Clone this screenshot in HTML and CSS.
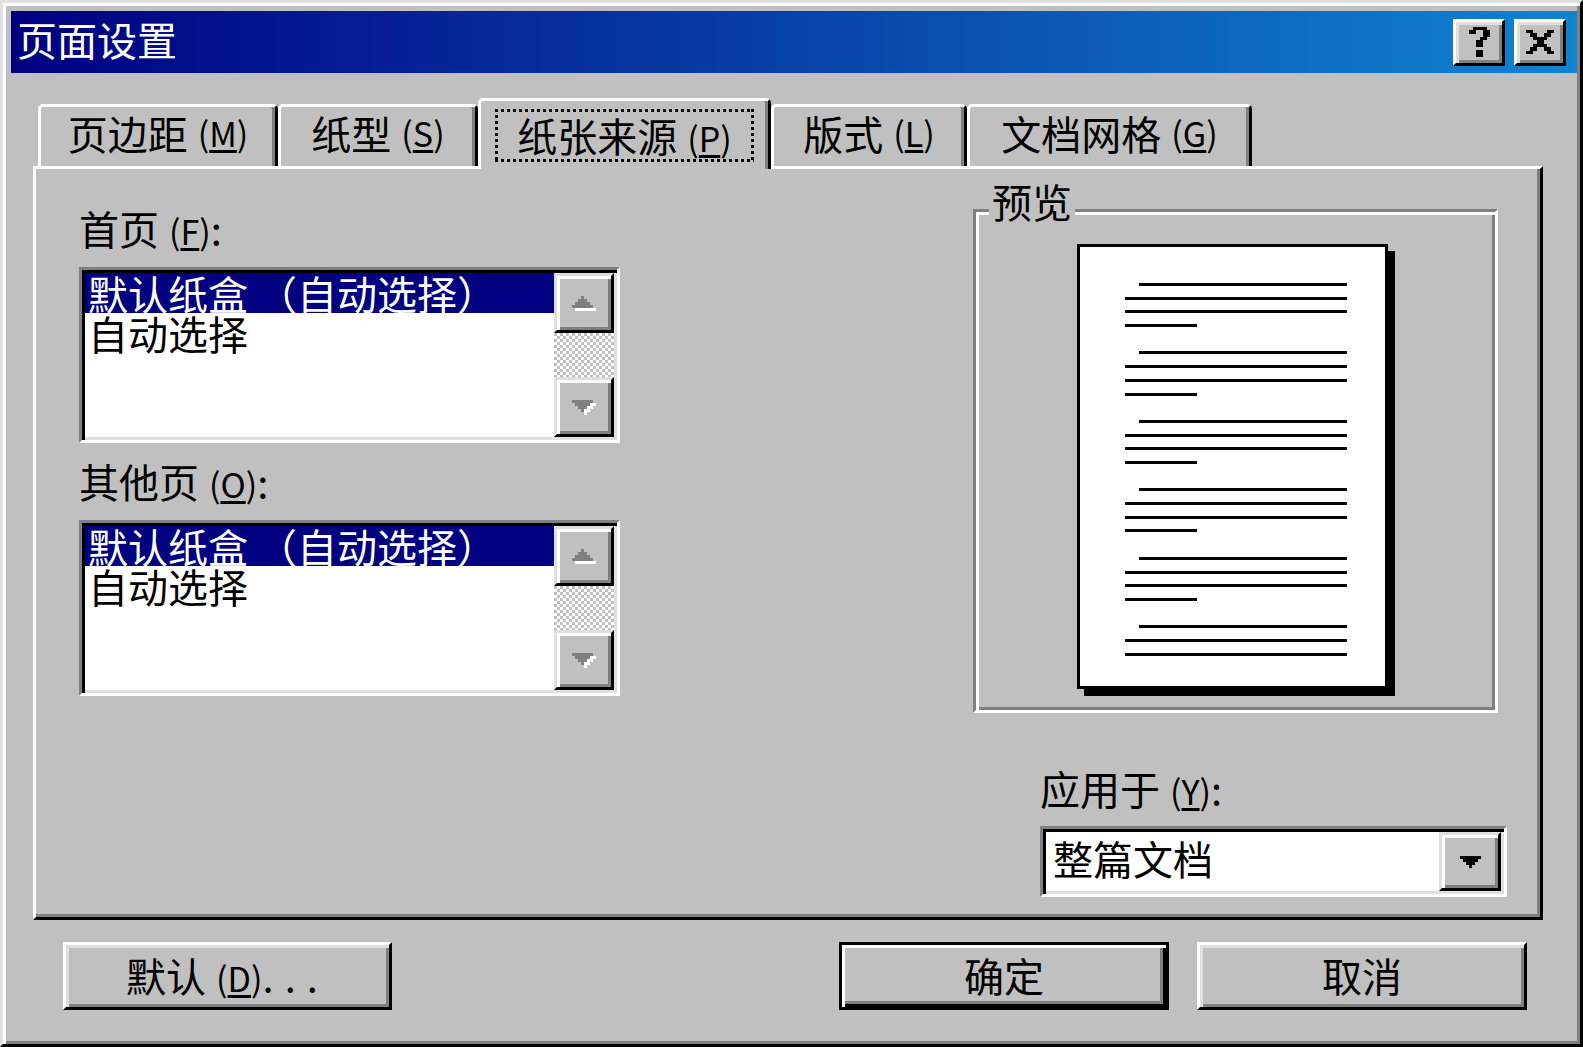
FILE: index.html
```html
<!DOCTYPE html>
<html lang="zh-CN">
<head>
    <meta charset="UTF-8">
    <title>页面设置</title>
    <link rel="stylesheet" href="styles.css">
</head>
<body>
    <div class="window">
        <div class="titlebar">
            <span class="title">页面设置</span>
            <div class="title-buttons">
                <button class="title-btn" title="帮助">
                    <svg width="21" height="30" viewBox="0 0 6 9" preserveAspectRatio="none" shape-rendering="crispEdges">
                        <rect x="1" y="0" width="4" height="1"/>
                        <rect x="0" y="1" width="2" height="1"/>
                        <rect x="4" y="1" width="2" height="2"/>
                        <rect x="3" y="3" width="2" height="1"/>
                        <rect x="2" y="4" width="2" height="2"/>
                        <rect x="2" y="7" width="2" height="2"/>
                    </svg>
                </button>
                <button class="title-btn" title="关闭">
                    <svg width="28" height="24" viewBox="0 0 8 7" preserveAspectRatio="none" shape-rendering="crispEdges">
                        <rect x="0" y="0" width="2" height="1"/><rect x="6" y="0" width="2" height="1"/>
                        <rect x="1" y="1" width="2" height="1"/><rect x="5" y="1" width="2" height="1"/>
                        <rect x="2" y="2" width="4" height="1"/>
                        <rect x="3" y="3" width="2" height="1"/>
                        <rect x="2" y="4" width="4" height="1"/>
                        <rect x="1" y="5" width="2" height="1"/><rect x="5" y="5" width="2" height="1"/>
                        <rect x="0" y="6" width="2" height="1"/><rect x="6" y="6" width="2" height="1"/>
                    </svg>
                </button>
            </div>
        </div>

        <div class="tabs">
            <div class="tab tab-margins">页边距<span class="key">(<u>M</u>)</span></div>
            <div class="tab tab-paper">纸型<span class="key">(<u>S</u>)</span></div>
            <div class="tab tab-source active"><span class="focus">纸张来源<span class="key">(<u>P</u>)</span></span></div>
            <div class="tab tab-layout">版式<span class="key">(<u>L</u>)</span></div>
            <div class="tab tab-grid">文档网格<span class="key">(<u>G</u>)</span></div>
        </div>

        <div class="panel">
            <div class="col-left">
                <div class="label">首页<span class="key">(<u>F</u>)</span>:</div>
                <div class="listbox">
                    <div class="list-items">
                        <div class="item selected">默认纸盒 （自动选择）</div>
                        <div class="item">自动选择</div>
                    </div>
                    <div class="scrollbar">
                        <div class="sb-btn">
                            <svg width="24" height="15" viewBox="0 0 24 15" shape-rendering="crispEdges">
                                <polygon fill="#fff" transform="translate(3,3)" points="9,0 12,0 12,3 15,3 15,6 18,6 18,9 21,9 21,12 0,12 0,9 3,9 3,6 6,6 6,3 9,3"/>
                                <polygon fill="#808080" points="9,0 12,0 12,3 15,3 15,6 18,6 18,9 21,9 21,12 0,12 0,9 3,9 3,6 6,6 6,3 9,3"/>
                            </svg>
                        </div>
                        <div class="sb-track"></div>
                        <div class="sb-btn">
                            <svg width="24" height="15" viewBox="0 0 24 15" shape-rendering="crispEdges">
                                <polygon fill="#fff" transform="translate(3,3)" points="0,0 21,0 21,3 18,3 18,6 15,6 15,9 12,9 12,12 9,12 9,9 6,9 6,6 3,6 3,3 0,3"/>
                                <polygon fill="#808080" points="0,0 21,0 21,3 18,3 18,6 15,6 15,9 12,9 12,12 9,12 9,9 6,9 6,6 3,6 3,3 0,3"/>
                            </svg>
                        </div>
                    </div>
                </div>

                <div class="label">其他页<span class="key">(<u>O</u>)</span>:</div>
                <div class="listbox">
                    <div class="list-items">
                        <div class="item selected">默认纸盒 （自动选择）</div>
                        <div class="item">自动选择</div>
                    </div>
                    <div class="scrollbar">
                        <div class="sb-btn">
                            <svg width="24" height="15" viewBox="0 0 24 15" shape-rendering="crispEdges">
                                <polygon fill="#fff" transform="translate(3,3)" points="9,0 12,0 12,3 15,3 15,6 18,6 18,9 21,9 21,12 0,12 0,9 3,9 3,6 6,6 6,3 9,3"/>
                                <polygon fill="#808080" points="9,0 12,0 12,3 15,3 15,6 18,6 18,9 21,9 21,12 0,12 0,9 3,9 3,6 6,6 6,3 9,3"/>
                            </svg>
                        </div>
                        <div class="sb-track"></div>
                        <div class="sb-btn">
                            <svg width="24" height="15" viewBox="0 0 24 15" shape-rendering="crispEdges">
                                <polygon fill="#fff" transform="translate(3,3)" points="0,0 21,0 21,3 18,3 18,6 15,6 15,9 12,9 12,12 9,12 9,9 6,9 6,6 3,6 3,3 0,3"/>
                                <polygon fill="#808080" points="0,0 21,0 21,3 18,3 18,6 15,6 15,9 12,9 12,12 9,12 9,9 6,9 6,6 3,6 3,3 0,3"/>
                            </svg>
                        </div>
                    </div>
                </div>
            </div>

            <div class="col-right">
                <div class="group">
                    <span class="group-label">预览</span>
                    <div class="page">
                        <div class="para">
                            <div class="line indent"></div>
                            <div class="line"></div>
                            <div class="line"></div>
                            <div class="line short"></div>
                        </div>
                        <div class="para">
                            <div class="line indent"></div>
                            <div class="line"></div>
                            <div class="line"></div>
                            <div class="line short"></div>
                        </div>
                        <div class="para">
                            <div class="line indent"></div>
                            <div class="line"></div>
                            <div class="line"></div>
                            <div class="line short"></div>
                        </div>
                        <div class="para">
                            <div class="line indent"></div>
                            <div class="line"></div>
                            <div class="line"></div>
                            <div class="line short"></div>
                        </div>
                        <div class="para">
                            <div class="line indent"></div>
                            <div class="line"></div>
                            <div class="line"></div>
                            <div class="line short"></div>
                        </div>
                        <div class="para">
                            <div class="line indent"></div>
                            <div class="line"></div>
                            <div class="line"></div>
                        </div>
                    </div>
                </div>

                <div class="label apply-label">应用于<span class="key">(<u>Y</u>)</span>:</div>
                <div class="combo">
                    <span class="combo-text">整篇文档</span>
                    <button class="combo-btn">
                        <svg width="21" height="12" viewBox="0 0 21 12" shape-rendering="crispEdges">
                            <polygon points="0,0 21,0 21,3 18,3 18,6 15,6 15,9 12,9 12,12 9,12 9,9 6,9 6,6 3,6 3,3 0,3"/>
                        </svg>
                    </button>
                </div>
            </div>
        </div>

        <div class="actions">
            <button class="btn btn-reset">默认<span class="key">(<u>D</u>)</span><span class="dots">...</span></button>
            <button class="btn default">确定</button>
            <button class="btn">取消</button>
        </div>
    </div>
</body>
</html>
```

FILE: styles.css
```css
* {
    box-sizing: border-box;
}

body {
    margin: 0;
    background-color: #c0c0c0;
    font-family: "Noto Sans CJK SC", "Liberation Sans", sans-serif;
    font-size: 40px;
    color: #000;
}

button {
    font: inherit;
    color: inherit;
    padding: 0;
    margin: 0;
    background-color: #c0c0c0;
    cursor: pointer;
}

/* outer window frame */
.window {
    width: 1583px;
    height: 1047px;
    background-color: #c0c0c0;
    border: 3px solid;
    border-color: #dfdfdf #000 #000 #dfdfdf;
    box-shadow: inset 3px 3px #fff, inset -3px -3px #808080;
    padding: 8px 3px 0 8px;
}

.titlebar {
    height: 62px;
    display: flex;
    align-items: center;
    justify-content: space-between;
    padding: 0 11px 0 6px;
    background: linear-gradient(90deg, #000080, #1084d0);
    color: #fff;
}

.title {
    line-height: 44px;
    margin-bottom: 7px;
}

.title-buttons {
    display: flex;
    gap: 9px;
}

.title-btn {
    width: 52px;
    height: 47px;
    display: flex;
    align-items: center;
    justify-content: center;
    border: 3px solid;
    border-color: #fff #000 #000 #fff;
    box-shadow: inset 3px 3px #dfdfdf, inset -3px -3px #808080;
}

/* raised bevel for scroll and combo buttons */
.sb-btn,
.combo-btn {
    display: flex;
    align-items: center;
    justify-content: center;
    border: 3px solid;
    border-color: #dfdfdf #000 #000 #dfdfdf;
    box-shadow: inset 3px 3px #fff, inset -3px -3px #808080;
    background-color: #c0c0c0;
}

/* tabs */
.tabs {
    display: flex;
    align-items: flex-end;
    height: 68px;
    margin-top: 25px;
    padding-left: 27px;
}

.tab {
    height: 62px;
    display: flex;
    align-items: center;
    justify-content: center;
    padding-bottom: 7px;
    line-height: 44px;
    white-space: nowrap;
    border: 3px solid;
    border-bottom: 0;
    border-color: #fff #000 transparent #fff;
    border-radius: 5px 5px 0 0;
    box-shadow: inset -3px 0 #808080;
    background-color: #c0c0c0;
}

.tab-margins { width: 240px; }
.tab-paper { width: 200px; }
.tab-source { width: 293px; }
.tab-layout { width: 196px; }
.tab-grid { width: 285px; }

.tab.active {
    height: 71px;
    margin-bottom: -3px;
    padding-bottom: 0;
    position: relative;
    z-index: 1;
}

.focus {
    display: inline-block;
    line-height: 41px;
    padding: 6px 22px;
    background:
        repeating-linear-gradient(90deg, #000 0 3px, transparent 3px 6px) top / 100% 3px no-repeat,
        repeating-linear-gradient(90deg, #000 0 3px, transparent 3px 6px) bottom / 100% 3px no-repeat,
        repeating-linear-gradient(180deg, #000 0 3px, transparent 3px 6px) left / 3px 100% no-repeat,
        repeating-linear-gradient(180deg, #000 0 3px, transparent 3px 6px) right / 3px 100% no-repeat;
}

/* accelerator like (M) */
.key {
    font-size: 34px;
    line-height: 1;
    margin-left: 10px;
}

.key u {
    text-underline-offset: 3px;
}

/* tab page */
.panel {
    height: 754px;
    margin: 0 34px 0 22px;
    border: 3px solid;
    border-color: #fff #000 #000 #fff;
    box-shadow: inset -3px -3px #808080;
    display: flex;
    justify-content: space-between;
    padding: 0 33px 0 43px;
}

.label {
    line-height: 44px;
    white-space: nowrap;
}

.col-left {
    width: 541px;
    padding-top: 37px;
}

.col-left .label {
    margin-bottom: 17px;
}

.listbox {
    width: 541px;
    height: 176px;
    margin-bottom: 16px;
    display: flex;
    padding: 3px;
    background-color: #fff;
    border: 3px solid;
    border-color: #808080 #fff #fff #808080;
    box-shadow: inset 3px 3px #000, inset -3px -3px #dfdfdf;
}

.list-items {
    flex: 1;
}

.item {
    line-height: 40px;
    padding-left: 3px;
    white-space: nowrap;
}

.item.selected {
    background-color: #000080;
    color: #fff;
}

.scrollbar {
    width: 60px;
    display: flex;
    flex-direction: column;
}

.sb-btn {
    height: 60px;
}

.sb-track {
    flex: 1;
    background: repeating-conic-gradient(#fff 0 25%, #c0c0c0 0 50%) 0 0 / 6px 6px;
}

.col-right {
    width: 534px;
    padding-top: 40px;
}

/* preview group box */
.group {
    position: relative;
    width: 525px;
    height: 504px;
    padding: 32px 6px 0 0;
    border: 3px solid;
    border-color: #808080 #fff #fff #808080;
    box-shadow: inset 3px 3px #fff, inset -3px -3px #808080;
}

.group-label {
    position: absolute;
    top: -33px;
    left: 13px;
    padding: 0 3px;
    line-height: 44px;
    background-color: #c0c0c0;
}

.page {
    width: 311px;
    height: 445px;
    margin: 0 auto;
    border: 3px solid #000;
    background-color: #fff;
    box-shadow: 7px 7px 0 #000;
    padding: 36px 38px 0 45px;
}

.para {
    display: flex;
    flex-direction: column;
    gap: 10.7px;
    margin-bottom: 24.4px;
}

.line {
    height: 3px;
    background-color: #000;
}

.line.indent {
    margin-left: 14px;
}

.line.short {
    width: 72px;
}

.apply-label {
    margin: 53px 0 16px 67px;
}

.combo {
    width: 467px;
    height: 71px;
    margin-left: 67px;
    display: flex;
    align-items: center;
    padding: 3px;
    background-color: #fff;
    border: 3px solid;
    border-color: #808080 #fff #fff #808080;
    box-shadow: inset 3px 3px #000, inset -3px -3px #dfdfdf;
}

.combo-text {
    flex: 1;
    padding-left: 7px;
    line-height: 44px;
    margin-bottom: 7px;
}

.combo-btn {
    width: 62px;
    height: 59px;
}

/* dialog buttons */
.actions {
    display: flex;
    gap: 28px;
    margin-top: 22px;
    padding: 0 50px 0 52px;
}

.btn {
    width: 330px;
    height: 68px;
    line-height: 44px;
    padding-bottom: 3px;
    white-space: nowrap;
    border: 3px solid;
    border-color: #fff #000 #000 #fff;
    box-shadow: inset 3px 3px #dfdfdf, inset -3px -3px #808080;
}

.btn-reset {
    width: 329px;
    margin-right: auto;
}

.btn.default {
    border-color: #000;
    box-shadow: inset 3px 3px #fff, inset -3px -3px #000, inset -6px -6px #808080;
}

.dots {
    letter-spacing: 11px;
}
```
